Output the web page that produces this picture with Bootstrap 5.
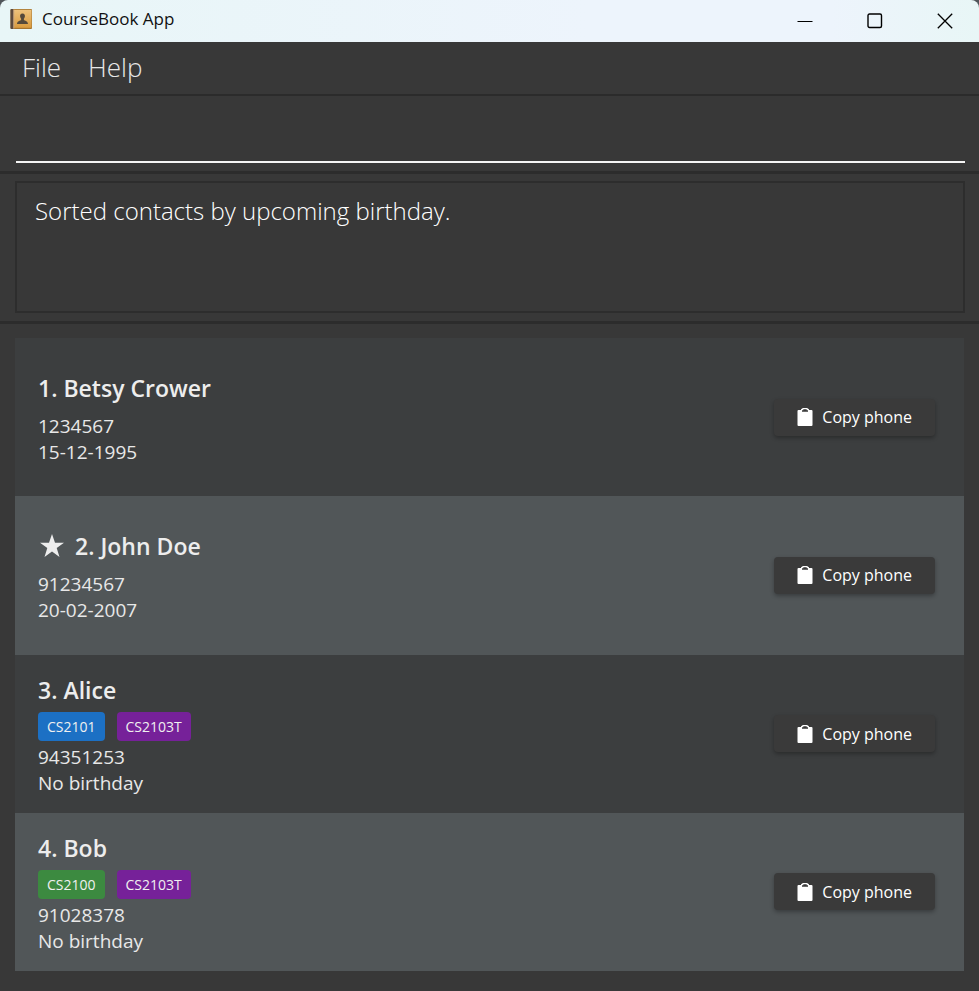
<!DOCTYPE html>
<html lang="en">
<head>
<meta charset="utf-8">
<meta name="viewport" content="width=device-width, initial-scale=1">
<title>CourseBook App</title>
<link href="https://cdn.jsdelivr.net/npm/bootstrap@5.3.0/dist/css/bootstrap.min.css" rel="stylesheet">
<style>
  body { background: #383838; color: #e8e8e8; font-family: "Open Sans", "Noto Sans", sans-serif; }
  .app-window { background: #383838; }
  .title-bar { height: 42px; padding: 0 11px 4px 10px; gap: 10px; color: #111; background: linear-gradient(90deg, #e8f6f7, #edf4fc 60%, #edf4fc 85%, #e8f6f6); border-radius: 8px 8px 0 0; }
  .title-corners { background: #50555a; }
  .title-text { font-size: 17px; line-height: 24px; }
  .win-btn { width: 46px; height: 38px; color: #111; background: none; border: 0; padding: 0; }
  .menu-bar { height: 54px; padding: 0 22px 2px; gap: 27px; border-bottom: 2px solid #2b2b2b; }
  .menu-btn { font-size: 26px; line-height: 36px; font-weight: 300; color: #e8e8e8; background: none; border: 0; padding: 0; }
  .command-pane { padding: 18px 14px 8px 16px; border-bottom: 3px solid #2c2c2c; }
  .command-box { height: 49px; font-size: 24px; font-weight: 300; background: none; border: 0; border-bottom: 2px solid #f4f4f4; border-radius: 0; color: #fff; }
  .command-box:focus { background: none; color: #fff; box-shadow: none; }
  .result-pane { padding: 7px 14px 8px 15px; border-bottom: 3px solid #2c2c2c; }
  .result-box { height: 132px; padding: 10px 18px; font-size: 24px; line-height: 36px; font-weight: 300; color: #fff; background: none; border: 2px solid #2d2d2d; border-radius: 0; resize: none; }
  .result-box:focus { background: none; color: #fff; border-color: #2d2d2d; box-shadow: none; }
  .list-pane { padding: 14px 15px 20px 15px; }
  .contact-list { display: grid; grid-auto-rows: 1fr; }
  .contact { padding: 16px 29px 16px 23px; background: #3c3e3f; }
  .contact:nth-child(even) { background: #515658; }
  .contact-info { padding-top: 3px; }
  .contact-name { font-size: 23px; line-height: 32px; font-weight: 600; color: #ededed; gap: 11px; }
  .contact-tags { gap: 12px; margin: 6px 0 3px; }
  .tag { font-size: 14px; line-height: 29px; padding: 0 9px; border-radius: 4px; color: #f0f0f0; }
  .tag-blue { background: #1c70c4; }
  .tag-purple { background: #762199; }
  .tag-green { background: #3c8a40; }
  .contact-line { font-size: 19px; line-height: 26px; }
  .copy-btn { gap: 9px; height: 37px; padding: 0 23px; font-size: 16px; line-height: 24px; color: #fff; background: #3a3a3a; border: 0; border-radius: 4px; box-shadow: 0 2px 4px rgba(0, 0, 0, .3); }
</style>
<script src="https://cdn.jsdelivr.net/npm/bootstrap@5.3.0/dist/js/bootstrap.bundle.min.js"></script>
</head>
<body>
<svg class="d-none" aria-hidden="true">
  <symbol id="clipboard" viewBox="0 0 16 20">
    <path fill="#fff" d="M1.500 3H4V2.500Q4 1.800 5 1.800Q5.200 1 6.200 1H9.800Q10.800 1 11 1.800Q12 1.800 12 2.500V3h2.500Q15.500 3 15.500 4V18Q15.500 19 14.500 19H1.500Q.500 19 .500 18V4Q.500 3 1.500 3Z"/>
    <path fill="#3a3a3a" d="M5 4.800V3.200H6.300V2.200H9.700V3.200H11V4.800Z"/>
  </symbol>
</svg>
<div class="app-window d-flex flex-column min-vh-100">
  <div class="title-corners">
    <header class="title-bar d-flex align-items-center">
      <svg width="22" height="22" viewBox="0 0 22 22" aria-hidden="true">
        <defs><linearGradient id="cover" x1="0" y1="0" x2="0" y2="1"><stop offset="0" stop-color="#edc27c"/><stop offset="1" stop-color="#d99b3e"/></linearGradient></defs>
        <rect x=".5" y="1" width="21.500" height="20" rx="1" fill="#a5742f"/>
        <rect x="4" y="1.800" width="17.500" height="18" fill="url(#cover)"/>
        <rect x=".5" y="1" width="3" height="20" rx="1" fill="#5c4a3d"/>
        <rect x="3.300" y="1.500" width="1" height="19" fill="#c9a987"/>
        <path fill="#54493b" d="M12.500 5.500c2 0 2.600 1.400 2.400 3-.1 1-.6 1.800-1 2.300v1.200c.9.700 4 1 4.100 4H7c.1-3 3.200-3.300 4.100-4v-1.200c-.4-.5-.9-1.300-1-2.300-.2-1.600.4-3 2.400-3Z"/>
      </svg>
      <span class="title-text">CourseBook App</span>
      <div class="ms-auto d-flex gap-4">
        <button class="win-btn" type="button" aria-label="Minimize"><svg width="16" height="16" viewBox="0 0 16 16"><path d="M.5 8.500h15" stroke="#000"/></svg></button>
        <button class="win-btn" type="button" aria-label="Maximize"><svg width="16" height="16" viewBox="0 0 16 16"><rect x="1" y="1" width="13.500" height="13.500" rx="1.500" fill="none" stroke="#000" stroke-width="1.400"/></svg></button>
        <button class="win-btn" type="button" aria-label="Close"><svg width="16" height="16" viewBox="0 0 16 16"><path d="M.8.800l14.400 14.400M15.200.800.8 15.200" stroke="#000" stroke-width="1.300"/></svg></button>
      </div>
    </header>
  </div>
  <nav class="menu-bar d-flex align-items-center" aria-label="Main menu">
    <button class="menu-btn" type="button">File</button>
    <button class="menu-btn" type="button">Help</button>
  </nav>
  <div class="command-pane">
    <input class="command-box form-control p-0" type="text" aria-label="Command">
  </div>
  <div class="result-pane">
    <textarea class="result-box form-control d-block" readonly aria-label="Result">Sorted contacts by upcoming birthday.</textarea>
  </div>
  <main class="list-pane flex-grow-1 d-flex flex-column">
    <ol class="contact-list list-unstyled flex-grow-1 mb-0">
      <li class="contact d-flex align-items-center justify-content-between">
        <div class="contact-info">
          <h2 class="contact-name d-flex align-items-center mb-0">1. Betsy Crower</h2>
          <div class="contact-tags d-flex"></div>
          <div class="contact-line">1234567</div>
          <div class="contact-line">15-12-1995</div>
        </div>
        <button class="copy-btn d-flex align-items-center" type="button"><svg width="16" height="20"><use href="#clipboard"/></svg>Copy phone</button>
      </li>
      <li class="contact d-flex align-items-center justify-content-between">
        <div class="contact-info">
          <h2 class="contact-name d-flex align-items-center mb-0"><svg width="26" height="26" viewBox="0 0 26 26" role="img" aria-label="Favourite"><path fill="#ededed" d="M14 1l3 8.700h9l-7.300 5.400 2.800 8.900L14 18.600 6.500 24l2.800-8.900L2 9.700h9Z"/></svg>2. John Doe</h2>
          <div class="contact-tags d-flex"></div>
          <div class="contact-line">91234567</div>
          <div class="contact-line">20-02-2007</div>
        </div>
        <button class="copy-btn d-flex align-items-center" type="button"><svg width="16" height="20"><use href="#clipboard"/></svg>Copy phone</button>
      </li>
      <li class="contact d-flex align-items-center justify-content-between">
        <div class="contact-info">
          <h2 class="contact-name d-flex align-items-center mb-0">3. Alice</h2>
          <div class="contact-tags d-flex"><span class="tag tag-blue">CS2101</span><span class="tag tag-purple">CS2103T</span></div>
          <div class="contact-line">94351253</div>
          <div class="contact-line">No birthday</div>
        </div>
        <button class="copy-btn d-flex align-items-center" type="button"><svg width="16" height="20"><use href="#clipboard"/></svg>Copy phone</button>
      </li>
      <li class="contact d-flex align-items-center justify-content-between">
        <div class="contact-info">
          <h2 class="contact-name d-flex align-items-center mb-0">4. Bob</h2>
          <div class="contact-tags d-flex"><span class="tag tag-green">CS2100</span><span class="tag tag-purple">CS2103T</span></div>
          <div class="contact-line">91028378</div>
          <div class="contact-line">No birthday</div>
        </div>
        <button class="copy-btn d-flex align-items-center" type="button"><svg width="16" height="20"><use href="#clipboard"/></svg>Copy phone</button>
      </li>
    </ol>
  </main>
</div>
</body>
</html>
